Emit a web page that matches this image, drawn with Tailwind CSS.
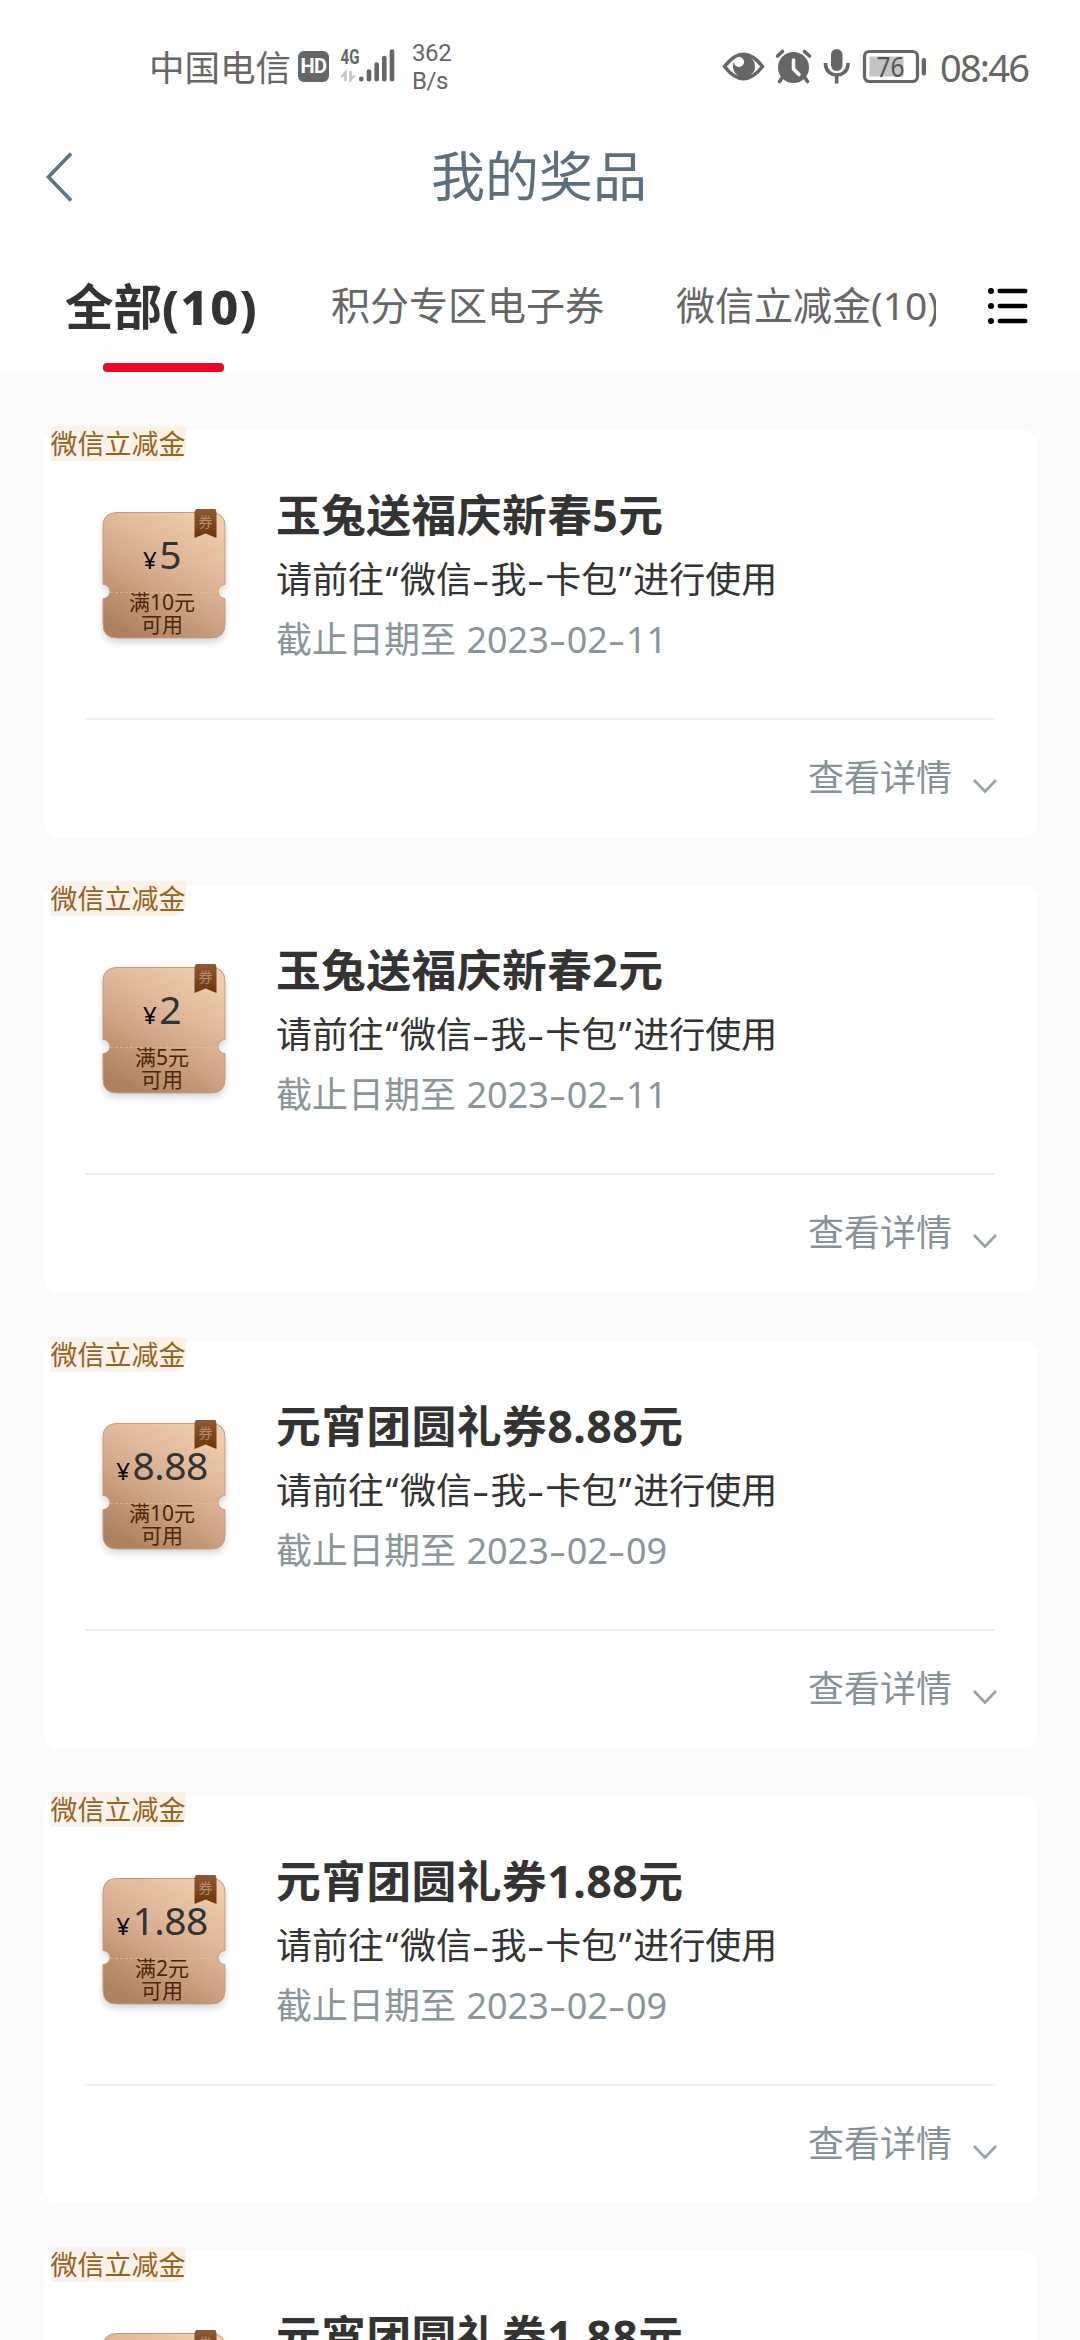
<!DOCTYPE html>
<html lang="zh-CN">
<head>
<meta charset="utf-8">
<title>我的奖品</title>
<script src="https://cdn.jsdelivr.net/npm/@tailwindcss/browser@4"></script>
</head>
<body class="bg-[#fafafa]">
<div class="w-[1080px] h-[2340px] overflow-hidden bg-[#fafafa] font-['Noto_Sans','Noto_Sans_CJK_SC',sans-serif] text-[#333]">
  <div class="bg-[#fefefe] h-[373px] flex flex-col">
    <!-- status bar -->
    <div class="h-[120px] pt-[36px] flex items-start text-[#666]">
      <div class="ml-[149px] w-[149px] h-[62px] leading-[62px] text-[35.500px] whitespace-nowrap">中国电信</div>
      <div class="mt-[15px] w-[31px] h-[31px] rounded-[6px] bg-[#666] text-white text-[20px] leading-[31px] font-bold text-center tracking-[-0.5px] font-[Roboto,sans-serif]">HD</div>
      <svg class="ml-[11px] mt-[10px] w-[56px] h-[40px]" viewBox="340 46 56 40">
        <text x="340.500" y="63.500" font-family="Roboto" font-weight="700" font-size="20.500" textLength="19" lengthAdjust="spacingAndGlyphs" fill="#666">4G</text>
        <g stroke="#666" stroke-width="4.600" stroke-linecap="round">
          <path d="M361.300 79.300v-.600M369 79.300V71.500M376.700 79.300V64.500M384.300 79.300V58M392 79.300V51.500"/>
        </g>
        <g stroke="#c6c6c6" stroke-width="2.600" fill="none"><path d="M341.500 77l4-4.500V81M350.500 71V80l4-4.500"/></g>
      </svg>
      <div class="ml-[16px] mt-[3px] w-[50px] text-[24px] leading-[28px] font-[Roboto,sans-serif] tracking-[-0.4px]">362<br>B/s</div>
      <svg class="ml-[258px] mt-[10px] w-[210px] h-[42px]" viewBox="720 46 210 42" fill="none">
        <path d="M724.500 66.500Q743.500 42 762.500 66.500Q743.500 91 724.500 66.500Z" stroke="#666" stroke-width="3.600" stroke-linejoin="round"/>
        <circle cx="744" cy="66.500" r="11" fill="#666"/><circle cx="739" cy="62" r="5" fill="#fefefe"/>
        <circle cx="793.500" cy="67.500" r="15.500" fill="#666"/>
        <path d="M777.500 56l5-4.500M809.500 56l-5-4.500M782 78l-2.500 3.500M805 78l2.500 3.500" stroke="#666" stroke-width="3.600" stroke-linecap="round"/>
        <path d="M793.500 60v9l5.500 5.500" stroke="#fefefe" stroke-width="3.600" stroke-linecap="round" stroke-linejoin="round"/>
        <rect x="831" y="49" width="11.500" height="22" rx="5.700" fill="#666"/>
        <path d="M825.500 63v1.500c1 14 21.500 14 22.500 0V63M836.700 76v7.500" stroke="#666" stroke-width="3.600"/>
        <rect x="864.500" y="51.500" width="53" height="30" rx="5" stroke="#666" stroke-width="3.200"/>
        <rect x="869.500" y="56.500" width="34" height="20" fill="#c4c4c4"/>
        <rect x="921.700" y="58" width="4.300" height="17.500" rx="2" fill="#666"/>
        <text x="876.500" y="76.500" font-family="Noto Sans" font-size="27" textLength="28" lengthAdjust="spacingAndGlyphs" fill="#555">76</text>
      </svg>
      <div class="ml-[10px] h-[62px] leading-[62px] text-[38px] tracking-[-1.8px] whitespace-nowrap">08:46</div>
    </div>
    <!-- title bar -->
    <div class="h-[112px] flex items-center">
      <svg class="ml-[44px] w-[32px] h-[52px]" viewBox="0 0 32 52" fill="none"><path d="M27 3.500L4.500 27L27 50.500" stroke="#5c7486" stroke-width="3.600"/></svg>
      <div class="ml-[355px] text-[54px] leading-[112px] text-[#5d6f7c] whitespace-nowrap">我的奖品</div>
    </div>
    <!-- tabs -->
    <div class="h-[141px] flex items-start">
      <div class="ml-[65px] w-[266px]">
        <div class="text-[48.500px] leading-[149px] h-[131px] font-bold whitespace-nowrap">全部<span class="font-extrabold tracking-[1.6px]">(10)</span></div>
        <div class="ml-[38px] w-[121px] h-[9px] rounded-[4px] bg-[#e60a28]"></div>
      </div>
      <div class="w-[345px] text-[39px] leading-[146px] text-[#666] whitespace-nowrap">积分专区电子券</div>
      <div class="w-[260px] overflow-hidden text-[39px] leading-[146px] text-[#666] whitespace-nowrap">微信立减金(10)</div>
      <svg class="ml-[51px] mt-[53px] w-[44px] h-[42px]" viewBox="987 285 44 42"><g fill="#000"><circle cx="991" cy="291" r="3"/><circle cx="991" cy="306" r="3"/><circle cx="991" cy="321" r="3"/><rect x="997.500" y="288.700" width="30" height="4.600" rx="2.200"/><rect x="997.500" y="303.700" width="30" height="4.600" rx="2.200"/><rect x="997.500" y="318.700" width="30" height="4.600" rx="2.200"/></g></svg>
    </div>
  </div>
  <div id="list" class="pt-[57px] px-[43.5px] flex flex-col gap-[48.300px]"></div>
</div>

<template id="card">
  <div class="relative h-[407px] shrink-0 bg-white rounded-[14px]">
    <div class="absolute left-[7px] top-[-4px] w-[135px] h-[35px] leading-[35px] text-[27px] rounded-br-[12px] bg-linear-to-r from-[#f8f2ee] to-[#fdf1e4] text-[#96621f] whitespace-nowrap">微信立减金</div>
    <div class="h-[288px] flex">
      <div class="relative ml-[54.500px] mt-[74px] w-[132px] h-[146px]">
        <svg class="absolute inset-0 w-[132px] h-[146px]" viewBox="98 504 132 146">
          <defs>
            <linearGradient id="g" x1="0.850" y1="0" x2="0.300" y2="1"><stop offset="0" stop-color="#f0cfb0"/><stop offset="0.500" stop-color="#d8b091"/><stop offset="1" stop-color="#ae8260"/></linearGradient>
            <linearGradient id="r" x1="0" y1="0" x2="0" y2="1"><stop offset="0" stop-color="#8d5a36"/><stop offset="1" stop-color="#6b3509"/></linearGradient>
            <filter id="s" x="-20%" y="-20%" width="140%" height="140%"><feDropShadow dx="0" dy="4" stdDeviation="3.500" flood-color="#000" flood-opacity="0.160"/></filter>
          </defs>
          <path filter="url(#s)" fill="url(#g)" stroke="#c09a7c" stroke-width="1" d="M117 512.500H211Q225 512.500 225 526.500V584.500A7 7 0 0 0 225 598.500V624Q225 638 211 638H117Q103 638 103 624V598.500A7 7 0 0 0 103 584.500V526.500Q103 512.500 117 512.500Z"/>
          <path d="M110 592.500H218" stroke="#e6c4a4" stroke-width="1" stroke-dasharray="3 2" opacity=".6"/>
          <path fill="url(#r)" d="M196 509H215.500L216.500 512V538L205.500 533.500L194.500 538V512Z"/>
          <text x="198.500" y="527" font-family="Noto Sans CJK SC" font-size="14" fill="#b98b6a">券</text>
        </svg>
        <div class="relative pt-[17px] -ml-[4px] text-center">
          <div class="h-[70px] leading-[66px] whitespace-nowrap text-[39px] tracking-[-0.5px]"><span class="text-[24px] text-black mr-[3px]">¥</span><span data-k="price"></span></div>
          <div class="text-[21px] leading-[22px] text-[#4a2508]"><div data-k="min"></div><div>可用</div></div>
        </div>
      </div>
      <div class="ml-[46px] pt-[53px] whitespace-nowrap">
        <div data-k="title" class="text-[44.700px] leading-[63px] h-[64px] font-bold tracking-[0.5px]"></div>
        <div class="text-[36px] leading-[66px] h-[65px]">请前往<span class="mx-[1.500px]">“</span>微信<span class="inline-block scale-x-150 mx-[3.500px]">-</span>我<span class="inline-block scale-x-150 mx-[3.500px]">-</span>卡包<span class="mx-[1.500px]">”</span>进行使用</div>
        <div class="text-[36px] leading-[56px] text-[#8a9599]">截止日期至 <span class="ml-px">2023</span><span class="inline-block scale-x-150 mx-[3.200px]">-</span>02<span class="inline-block scale-x-150 mx-[3.200px]">-</span><span data-k="day"></span></div>
      </div>
    </div>
    <div class="mx-[42.500px] h-[2px] bg-[#eee]"></div>
    <div class="h-[116px] flex justify-end pr-[38px]">
      <div class="text-[36px] leading-[115px] text-[#879297]">查看详情</div>
      <svg class="ml-[18.500px] mt-[57px] w-[28px] h-[18px]" viewBox="0 0 28 18" fill="none"><path d="M3 3L14 14.500L25 3" stroke="#98a1a6" stroke-width="2.600"/></svg>
    </div>
  </div>
</template>
<script>
const coupons = [
  {price:'5', min:'满10元', title:'玉兔送福庆新春5元', day:'11'},
  {price:'2', min:'满5元', title:'玉兔送福庆新春2元', day:'11'},
  {price:'8.88', min:'满10元', title:'元宵团圆礼券8.88元', day:'09'},
  {price:'1.88', min:'满2元', title:'元宵团圆礼券1.88元', day:'09'},
  {price:'1.88', min:'满2元', title:'元宵团圆礼券1.88元', day:'09'}
];
const list = document.getElementById('list'), tpl = document.getElementById('card');
for (const c of coupons) {
  const n = tpl.content.cloneNode(true);
  n.querySelectorAll('[data-k]').forEach(e => e.textContent = c[e.dataset.k]);
  list.appendChild(n);
}
</script>
</body>
</html>
